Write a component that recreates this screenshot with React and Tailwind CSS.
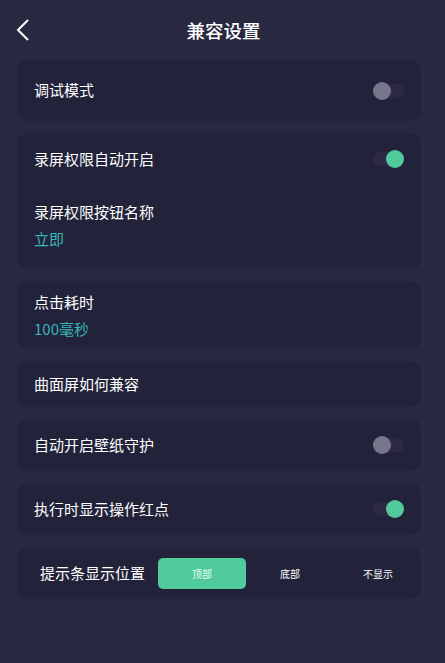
import React, { useState } from "react";

const font = { fontFamily: '"Noto Sans CJK SC", "Noto Sans", sans-serif' };

const Toggle = ({ on }) => (
  <div className="relative w-[31px] h-[18px] flex items-center">
    <div className="w-full h-[14px] rounded-full bg-[#2d2945]" />
    <div
      className={`absolute top-0 w-[18px] h-[18px] rounded-full ${
        on ? "right-0 bg-[#52cb9c]" : "left-0 bg-[#77768a]"
      }`}
    />
  </div>
);

const Card = ({ children, className = "" }) => (
  <div className={`bg-[#22233a] rounded-[10px] ml-[17px] mr-[24px] ${className}`}>{children}</div>
);

const App = () => {
  const [pos, setPos] = useState("顶部");

  return (
    <div className="min-h-[663px] bg-[#282940] text-white" style={font}>
      {/* Header */}
      <div className="relative h-[60px] flex items-center justify-center">
        <svg
          className="absolute left-[16px] top-[19px]"
          width="14"
          height="22"
          viewBox="0 0 14 22"
          fill="none"
          stroke="white"
          strokeWidth="2"
        >
          <path d="M12 1 L2 11 L12 21" />
        </svg>
        <h1 className="text-[18.5px] font-medium leading-none pl-[2px]">兼容设置</h1>
      </div>

      <div className="flex flex-col gap-[12px]">
        <Card className="h-[61px] flex items-center justify-between px-[17px]">
          <span className="text-[15px]">调试模式</span>
          <Toggle on={false} />
        </Card>

        <Card className="h-[136px] px-[17px] pt-[15px]">
          <div className="flex items-center justify-between h-[22px]">
            <span className="text-[15px]">录屏权限自动开启</span>
            <Toggle on />
          </div>
          <div className="mt-[31px] text-[15px] leading-[22px]">录屏权限按钮名称</div>
          <div className="mt-[5px] text-[15px] leading-[22px] text-[#38b4b6]">立即</div>
        </Card>

        <Card className="h-[68px] px-[17px] pt-[10px]">
          <div className="text-[15px] leading-[22px]">点击耗时</div>
          <div className="mt-[5px] text-[15px] leading-[22px] text-[#38b4b6]">100毫秒</div>
        </Card>

        <Card className="h-[46px] px-[17px] flex items-center">
          <span className="text-[15px]">曲面屏如何兼容</span>
        </Card>

        <Card className="h-[52px] flex items-center justify-between px-[17px]">
          <span className="text-[15px]">自动开启壁纸守护</span>
          <Toggle on={false} />
        </Card>

        <Card className="h-[52px] flex items-center justify-between px-[17px]">
          <span className="text-[15px]">执行时显示操作红点</span>
          <Toggle on />
        </Card>

        <Card className="h-[52px] flex items-center pl-[23px]">
          <span className="text-[15px] whitespace-nowrap shrink-0 mr-[13px]">提示条显示位置</span>
          <div className="flex shrink-0">
            {["顶部", "底部", "不显示"].map((p) => (
              <button
                key={p}
                onClick={() => setPos(p)}
                className={`w-[88px] h-[31px] rounded-[5px] text-[10px] flex items-center justify-center ${
                  pos === p ? "bg-[#52cb9c] text-[#e6fff4]" : "text-white"
                }`}
              >
                {p}
              </button>
            ))}
          </div>
        </Card>
      </div>
    </div>
  );
};

export default App;
